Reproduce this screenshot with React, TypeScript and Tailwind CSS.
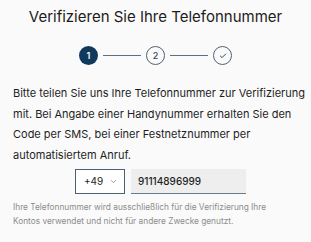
import { ChevronDown, Check } from "lucide-react";

const font = { fontFamily: "Inter, 'Noto Sans', sans-serif" };

function Stepper() {
  return (
    <div className="flex items-center justify-center mt-[19px]">
      <div className="w-[19px] h-[19px] rounded-full bg-[#0f3a5e] text-white text-[9px] font-semibold flex items-center justify-center">
        1
      </div>
      <div className="w-[38px] h-px bg-[#5e6f7d] mx-[5px]" />
      <div className="w-[19px] h-[19px] rounded-full border border-[#4f6173] text-[#34495c] text-[9px] font-medium flex items-center justify-center">
        2
      </div>
      <div className="w-[38px] h-px bg-[#5e6f7d] mx-[5px]" />
      <div className="w-[19px] h-[19px] rounded-full border border-[#4f6173] text-[#34495c] flex items-center justify-center">
        <Check className="w-[8px] h-[8px]" strokeWidth={3} />
      </div>
    </div>
  );
}

export default function App() {
  return (
    <div className="w-[311px] h-[242px] bg-[#fafafa] overflow-hidden" style={font}>
      <h1 className="pt-[7px] text-center text-[15px] text-[#1c1c1c] font-normal leading-[20px]">
        Verifizieren Sie Ihre Telefonnummer
      </h1>

      <Stepper />

      <p className="mt-[18px] pl-[13px] pr-[4px] text-[11px] leading-[20.5px] text-[#1e1e1e]">
        Bitte teilen Sie uns Ihre Telefonnummer zur Verifizierung mit. Bei Angabe einer Handynummer erhalten Sie den Code per SMS, bei einer Festnetznummer per automatisiertem Anruf.
      </p>

      <div className="flex items-center mt-[4px] ml-[75px] gap-[6px]">
        <div className="w-[50px] h-[25px] border border-[#4c6072] bg-white flex items-center justify-between pl-[8px] pr-[6px] text-[10px] text-[#1e1e1e]">
          <span>+49</span>
          <ChevronDown className="w-[9px] h-[9px] text-[#7a8792]" />
        </div>
        <div className="w-[115px] h-[25px] bg-[#eeeeee] border-b border-[#6a7d8d] flex items-center pl-[7px] text-[10px] font-medium text-[#1e1e1e]">
          91114896999
        </div>
      </div>

      <p className="mt-[6px] pl-[13px] pr-[20px] text-[8.3px] leading-[14px] text-[#8c8c8c]">
        Ihre Telefonnummer wird ausschließlich für die Verifizierung Ihre Kontos verwendet und nicht für andere Zwecke genutzt.
      </p>
    </div>
  );
}
